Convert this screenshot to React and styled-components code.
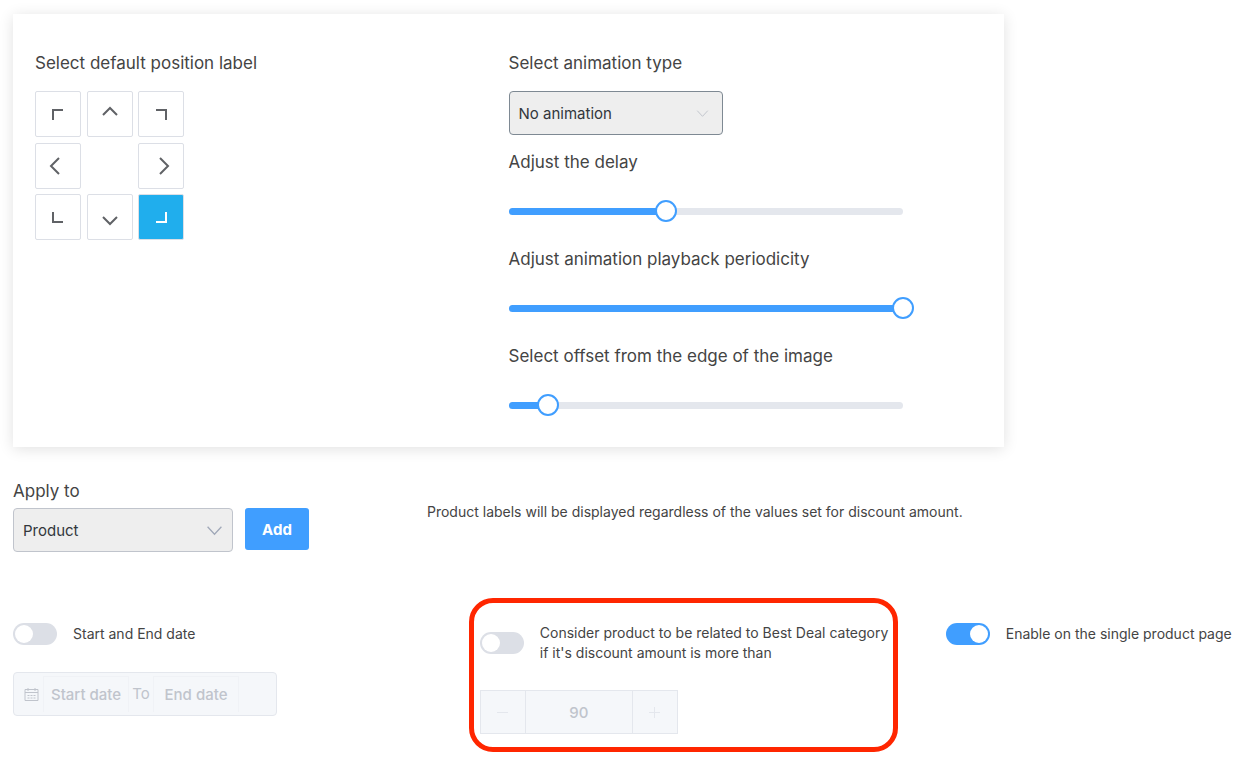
import React, { useState } from "react";
import styled, { createGlobalStyle } from "styled-components";

const blue = "#409eff";

const GlobalStyle = createGlobalStyle`
  *, *::before, *::after { box-sizing: border-box; }
  body { margin: 0; background: #fff; }
  body, button, input, select { font-family: Inter, "Liberation Sans", sans-serif; }
`;

const Page = styled.main`
  padding: 14px 0 8px 13px;
  color: #444;
  font-size: 14px;
  line-height: 20px;
`;

const Panel = styled.section`
  display: grid;
  grid-template-columns: 1fr 1fr;
  width: 79.8%;
  padding: 37px 22px 31px;
  background: #fff;
  box-shadow: 0 2px 14px rgba(0, 0, 0, 0.12);
`;

const Heading = styled.label`
  display: block;
  font-size: 17px;
  line-height: 24px;
`;

const PositionGrid = styled.div`
  display: grid;
  grid-template-columns: repeat(3, 46px);
  grid-template-rows: repeat(3, 46px);
  justify-content: space-between;
  align-content: space-between;
  width: 149px;
  height: 149px;
  margin-top: 16px;
`;

const PositionButton = styled.button`
  display: grid;
  place-items: center;
  padding: 0;
  border: 1px solid #dcdfe6;
  border-radius: 2px;
  background: ${(p) => (p.$active ? "#20aeed" : "#fff")};
  color: ${(p) => (p.$active ? "#fff" : "#606266")};
`;

const SelectBox = styled.div`
  display: grid;
  align-items: center;
  width: ${(p) => p.$width};
  margin-top: ${(p) => p.$gap};

  > * { grid-area: 1 / 1; }
  > svg { justify-self: end; margin-right: ${(p) => p.$inset}; pointer-events: none; }
`;

const Select = styled.select`
  appearance: none;
  width: 100%;
  height: 44px;
  padding: 0 36px 0 9px;
  border: 1px solid ${(p) => p.$line};
  border-radius: 4px;
  background: #eee;
  color: #32373c;
  font-size: 15px;
`;

const SliderField = styled.div`
  margin-top: ${(p) => p.$gap};
  padding-right: 79px;
`;

const SliderTrack = styled.div`
  display: grid;
  align-items: center;
  margin-top: 26px;

  > * { grid-area: 1 / 1; }
`;

const Rail = styled.div`
  height: 7px;
  border-radius: 4px;
  background: ${(p) => (p.$filled ? blue : "#e4e7ed")};
`;

const Range = styled.input`
  appearance: none;
  width: auto;
  min-width: 0;
  height: 22px;
  margin: 0 -11px;
  background: transparent;

  &::-webkit-slider-thumb {
    appearance: none;
    width: 22px;
    height: 22px;
    border: 2px solid ${blue};
    border-radius: 50%;
    background: #fff;
  }
`;

const ApplyRow = styled.section`
  display: grid;
  grid-template-columns: 1fr 2fr;
  margin-top: 32px;
`;

const ApplyControls = styled.div`
  display: flex;
  gap: 12px;
  margin-top: 5px;
`;

const AddButton = styled.button`
  width: 64px;
  height: 42px;
  padding: 0;
  border: 0;
  border-radius: 3px;
  background: ${blue};
  color: #fff;
  font-size: 15px;
  font-weight: 700;
`;

const Note = styled.p`
  margin: 23px 0 0;
`;

const OptionsRow = styled.section`
  display: grid;
  grid-template-columns: 36.7% 38.4% 1fr;
  margin-top: 46px;
`;

const Option = styled.div`
  display: flex;
  flex-direction: column;
  gap: 27px;
  padding-top: 25px;
`;

const HighlightedOption = styled(Option)`
  width: 90%;
  padding: 20px 0 13px 6px;
  border: 5px solid #ff2600;
  border-radius: 24px;
`;

const SwitchLabel = styled.label`
  display: flex;
  align-items: center;
  gap: 16px;
  white-space: nowrap;
`;

const Switch = styled.input`
  appearance: none;
  flex: none;
  display: flex;
  width: 44px;
  height: 22px;
  margin: 0;
  padding: 2px;
  border-radius: 11px;
  background: #dcdfe6;

  &::before {
    content: "";
    width: 18px;
    height: 18px;
    border-radius: 50%;
    background: #fff;
  }
  &:checked { background: ${blue}; justify-content: flex-end; }
`;

const DateRange = styled.div`
  display: flex;
  align-items: center;
  width: 264px;
  height: 44px;
  padding: 0 10px;
  border: 1px solid #e4e7ed;
  border-radius: 4px;
  background: #f5f7fa;
  color: #c0c4cc;
  font-size: 15px;

  > svg { margin-right: 4px; }
`;

const DateInput = styled.input`
  width: 86px;
  height: 36px;
  padding: 0;
  border: 1px solid #f0f2f6;
  border-bottom: 0;
  background: transparent;
  font-size: 15px;
  font-weight: 500;
  text-align: center;

  &::placeholder { color: #c0c4cc; opacity: 1; }
`;

const DateSeparator = styled.span`
  width: 24px;
  text-align: center;
`;

const NumberField = styled.div`
  display: grid;
  grid-template-columns: 44px 1fr 44px;
  width: 198px;
  height: 44px;
  border: 1px solid #e4e7ed;
  background: #f5f7fa;
`;

const StepButton = styled.button`
  display: grid;
  place-items: center;
  padding: 0;
  border: 0;
  background: transparent;
  color: #e4e7ed;
`;

const NumberInput = styled.input`
  min-width: 0;
  padding: 0;
  border: solid #e4e7ed;
  border-width: 0 1px;
  background: transparent;
  color: #c0c4cc;
  font-size: 15px;
  font-weight: 500;
  text-align: center;
`;

const positions = [
  { name: "Top left", d: "M7 18V8H17" },
  { name: "Top", d: "M5 13L12 6L19 13" },
  { name: "Top right", d: "M7 8H17V18" },
  { name: "Left", d: "M13 4L5 12L13 20" },
  null,
  { name: "Right", d: "M11 4L19 12L11 20" },
  { name: "Bottom left", d: "M7 7V17H17" },
  { name: "Bottom", d: "M5 12L12 19L19 12" },
  { name: "Bottom right", d: "M17 7V17H7" },
];

function Chevron({ size, color }) {
  return (
    <svg width={size} height={size} viewBox="0 0 16 16" fill="none" stroke={color} aria-hidden="true">
      <path d="M1.5 4.5L8 11.5L14.5 4.5" strokeWidth="1.2" />
    </svg>
  );
}

function CalendarIcon() {
  return (
    <svg width="15" height="15" viewBox="0 0 15 15" fill="none" stroke="#c0c4cc" aria-hidden="true">
      <path d="M1 2.5H14V13.5H1ZM1 5.5H14M4 1V4M11 1V4" />
      <path d="M3.5 8.5H5.5M6.5 8.5H8.5M9.5 8.5H11.5M3.5 11H5.5M6.5 11H8.5M9.5 11H11.5" />
    </svg>
  );
}

function Slider({ id, label, initial, gap }) {
  const [value, setValue] = useState(initial);
  return (
    <SliderField $gap={gap}>
      <Heading htmlFor={id}>{label}</Heading>
      <SliderTrack>
        <Rail />
        <Rail $filled style={{ width: `${value}%` }} />
        <Range id={id} type="range" min="0" max="100" value={value} onChange={(e) => setValue(e.target.value)} />
      </SliderTrack>
    </SliderField>
  );
}

export default function App() {
  const [position, setPosition] = useState("Bottom right");
  return (
    <>
      <GlobalStyle />
      <Page>
        <Panel>
          <div>
            <Heading as="div" id="position-label">Select default position label</Heading>
            <PositionGrid role="group" aria-labelledby="position-label">
              {positions.map((p, i) =>
                p ? (
                  <PositionButton
                    key={p.name}
                    type="button"
                    aria-label={p.name}
                    aria-pressed={position === p.name}
                    $active={position === p.name}
                    onClick={() => setPosition(p.name)}
                  >
                    <svg width="24" height="24" viewBox="0 0 24 24" fill="none" stroke="currentColor" strokeWidth="2">
                      <path d={p.d} />
                    </svg>
                  </PositionButton>
                ) : (
                  <span key={i} />
                )
              )}
            </PositionGrid>
          </div>
          <div>
            <Heading htmlFor="animation">Select animation type</Heading>
            <SelectBox $width="214px" $gap="16px" $inset="14px">
              <Select id="animation" $line="#7e8993">
                <option>No animation</option>
              </Select>
              <Chevron size={13} color="#c0c4cc" />
            </SelectBox>
            <Slider id="delay" label="Adjust the delay" initial={40} gap="15px" />
            <Slider id="periodicity" label="Adjust animation playback periodicity" initial={100} gap="25px" />
            <Slider id="offset" label="Select offset from the edge of the image" initial={10} gap="25px" />
          </div>
        </Panel>

        <ApplyRow>
          <div>
            <Heading htmlFor="apply">Apply to</Heading>
            <ApplyControls>
              <SelectBox $width="220px" $gap="0" $inset="10px">
                <Select id="apply" $line="#c0c4cc">
                  <option>Product</option>
                </Select>
                <Chevron size={17} color="#a0a8b8" />
              </SelectBox>
              <AddButton type="button">Add</AddButton>
            </ApplyControls>
          </div>
          <Note>Product labels will be displayed regardless of the values set for discount amount.</Note>
        </ApplyRow>

        <OptionsRow>
          <Option>
            <SwitchLabel>
              <Switch type="checkbox" />
              Start and End date
            </SwitchLabel>
            <DateRange>
              <CalendarIcon />
              <DateInput placeholder="Start date" aria-label="Start date" disabled />
              <DateSeparator>To</DateSeparator>
              <DateInput placeholder="End date" aria-label="End date" disabled />
            </DateRange>
          </Option>
          <HighlightedOption>
            <SwitchLabel>
              <Switch type="checkbox" />
              <span>
                Consider product to be related to Best Deal category
                <br />
                if it's discount amount is more than
              </span>
            </SwitchLabel>
            <NumberField>
              <StepButton type="button" aria-label="Decrease" disabled>
                <svg width="13" height="13" viewBox="0 0 13 13" stroke="currentColor"><path d="M1 6.5H12" /></svg>
              </StepButton>
              <NumberInput type="text" inputMode="numeric" aria-label="Discount amount" defaultValue="90" disabled />
              <StepButton type="button" aria-label="Increase" disabled>
                <svg width="13" height="13" viewBox="0 0 13 13" stroke="currentColor"><path d="M1 6.5H12M6.5 1V12" /></svg>
              </StepButton>
            </NumberField>
          </HighlightedOption>
          <Option>
            <SwitchLabel>
              <Switch type="checkbox" defaultChecked />
              Enable on the single product page
            </SwitchLabel>
          </Option>
        </OptionsRow>
      </Page>
    </>
  );
}
